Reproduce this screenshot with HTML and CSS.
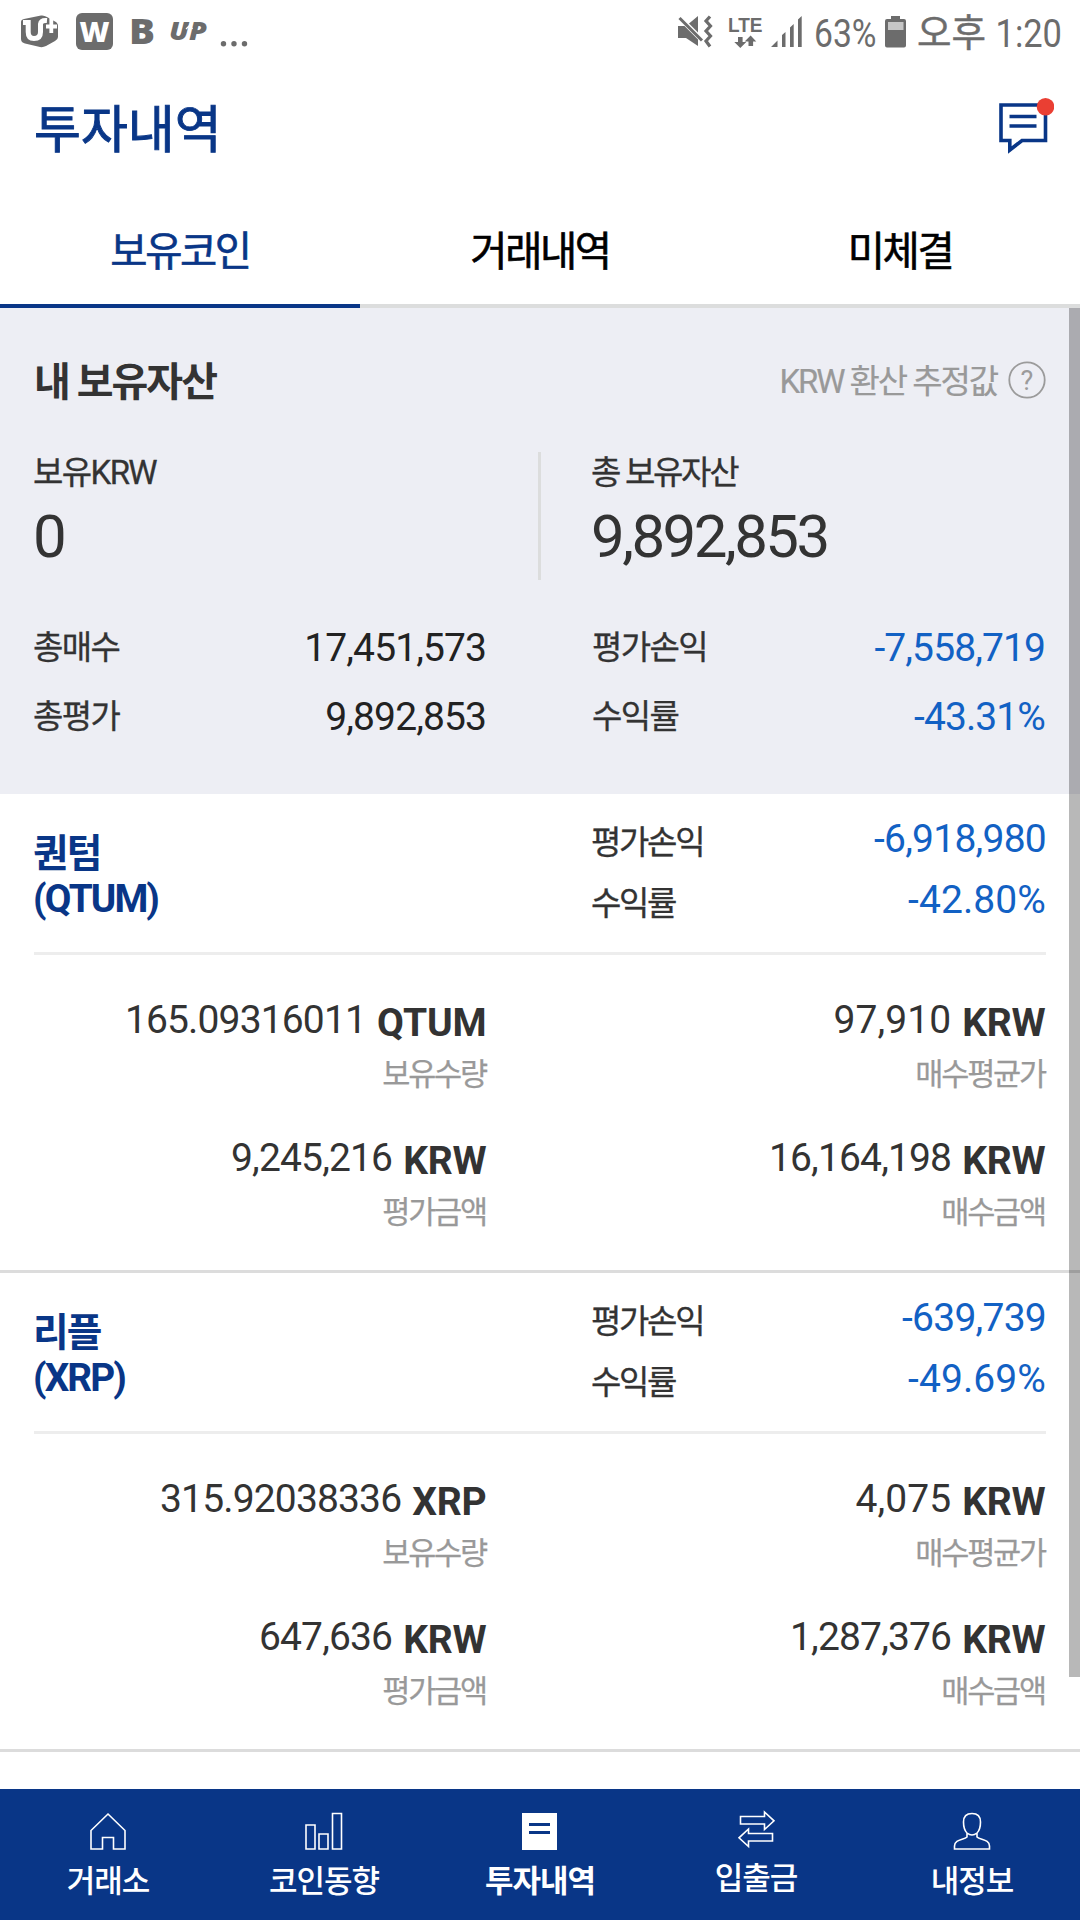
FILE: index.html
```html
<!DOCTYPE html>
<html lang="ko">
<head>
<meta charset="utf-8">
<title>투자내역</title>
<link rel="stylesheet" href="styles.css">
</head>
<body>
<div class="app">
  <div class="status">
    <svg class="status-icons" width="260" height="64" viewBox="0 0 260 64">
      <path class="g" d="M21 22Q21 19.500 24 19L41 15.500Q44 15 47 17L55 21.500Q58 23 58 26V37Q58 39.500 55 41L46 46Q43 47.500 40 47L25 43.500Q21 42.500 21 39Z"/>
      <path d="M23 22.500H28.200V32Q28.200 38.500 34 38.500 40.500 38.500 40.500 32V24Q41 20 47 20.500" fill="none" stroke="#fff" stroke-width="5"/>
      <path d="M51.300 18V33M46 26.500H57" fill="none" stroke="#fff" stroke-width="3.800"/>
      <rect class="g" x="76" y="13" width="37" height="37" rx="6"/>
      <text class="mark w" x="79.500" y="41.500" textLength="30" lengthAdjust="spacingAndGlyphs">W</text>
      <text class="mark b" x="129" y="44.200" textLength="26" lengthAdjust="spacingAndGlyphs">B</text>
      <text class="mark up" x="169" y="40" textLength="38" lengthAdjust="spacingAndGlyphs">UP</text>
      <path d="M187 42L189.500 27M186 29L190 25 192.500 29" fill="none" stroke="#fff" stroke-width="1.200"/>
      <circle class="g" cx="223.500" cy="43.700" r="2.700"/><circle class="g" cx="234" cy="43.700" r="2.700"/><circle class="g" cx="244.500" cy="43.700" r="2.700"/>
    </svg>
    <svg class="status-icons" width="420" height="64" viewBox="660 0 420 64">
      <path class="g" d="M678 26H686L698 16V46L686 38H678Z"/>
      <path d="M678 16L704 42" stroke="#fff" stroke-width="5"/>
      <path d="M679.500 18L702 40.500" stroke="#6c6c6c" stroke-width="3"/>
      <path d="M710 16.500L706 21 710.500 26 706 31 710.500 36 706 41 710 46.500" fill="none" stroke="#6c6c6c" stroke-width="3.200"/>
      <text class="lte" x="728" y="31.500" textLength="34.500" lengthAdjust="spacingAndGlyphs">LTE</text>
      <path class="g" d="M738 37h4.600v5h3.700l-6 6-6-6H738zM748.500 46h4.600v-4.500h3.200L750.600 35.500l-6 6h3.900z"/>
      <path class="g" d="M771 47L777.500 40.500V47ZM782 35L785.500 32V47H782ZM790 27.500L793.700 24V47H790ZM798 19.500L801.700 16V47H798Z"/>
      <text class="st" x="814" y="47" textLength="62.500" lengthAdjust="spacingAndGlyphs">63%</text>
      <path class="g" d="M891 16H900V19H904Q906 19 906 21V45.500Q906 47.500 904 47.500H887Q885 47.500 885 45.500V21Q885 19 887 19H891Z"/>
      <rect x="888" y="22" width="15.500" height="8" fill="#c6c6c6"/>
      <text class="st ko" x="917" y="46" textLength="69" lengthAdjust="spacingAndGlyphs">오후</text>
      <text class="st" x="995.500" y="47" textLength="66.500" lengthAdjust="spacingAndGlyphs">1:20</text>
    </svg>
  </div>

  <header class="header">
    <h1>투자내역</h1>
    <svg class="chat" width="56" height="58" viewBox="998 97 56 58">
      <path d="M1001 105H1045.500V140.500H1022L1009.800 150V140.500H1001Z" fill="none" stroke="#093687" stroke-width="3.600"/>
      <path d="M1009.500 116.500H1036.500M1009.500 126H1036.500" stroke="#093687" stroke-width="3.400"/>
      <circle cx="1045.500" cy="106.700" r="8.800" fill="#ea3f33"/>
    </svg>
  </header>

  <nav class="tabs">
    <a class="tab active">보유코인</a><a class="tab">거래내역</a><a class="tab">미체결</a>
  </nav>

  <main class="content">
    <section class="summary">
      <div class="summary-head">
        <h2>내 보유자산</h2>
        <div class="hint">KRW 환산 추정값
          <svg width="38" height="38" viewBox="0 0 38 38"><circle cx="19" cy="19" r="17.700" fill="none" stroke="#9b9b9b" stroke-width="1.800"/><text class="q" x="19" y="28.500">?</text></svg>
        </div>
      </div>
      <div class="totals">
        <div class="total"><span class="label">보유KRW</span><b>0</b></div>
        <div class="total right"><span class="label">총 보유자산</span><b>9,892,853</b></div>
      </div>
      <div class="grid">
        <div class="pair"><span class="label">총매수</span><span class="num">17,451,573</span></div>
        <div class="pair"><span class="label">평가손익</span><span class="num down">-7,558,719</span></div>
        <div class="pair"><span class="label">총평가</span><span class="num">9,892,853</span></div>
        <div class="pair"><span class="label">수익률</span><span class="num down">-43.31%</span></div>
      </div>
    </section>

    <section class="coin">
      <div class="coin-head">
        <h3>퀀텀<br>(QTUM)</h3>
        <div class="coin-rate">
          <div class="pair"><span class="label">평가손익</span><span class="num down">-6,918,980</span></div>
          <div class="pair"><span class="label">수익률</span><span class="num down percent">-42.80%</span></div>
        </div>
      </div>
      <div class="coin-body">
        <div class="cell"><p><span>165.09316011</span><b>QTUM</b></p><small>보유수량</small></div>
        <div class="cell average"><p><span>97,910</span><b>KRW</b></p><small>매수평균가</small></div>
        <div class="cell"><p><span>9,245,216</span><b>KRW</b></p><small>평가금액</small></div>
        <div class="cell"><p><span>16,164,198</span><b>KRW</b></p><small>매수금액</small></div>
      </div>
    </section>

    <section class="coin">
      <div class="coin-head">
        <h3>리플<br>(XRP)</h3>
        <div class="coin-rate">
          <div class="pair"><span class="label">평가손익</span><span class="num down">-639,739</span></div>
          <div class="pair"><span class="label">수익률</span><span class="num down percent">-49.69%</span></div>
        </div>
      </div>
      <div class="coin-body">
        <div class="cell"><p><span>315.92038336</span><b>XRP</b></p><small>보유수량</small></div>
        <div class="cell average"><p><span>4,075</span><b>KRW</b></p><small>매수평균가</small></div>
        <div class="cell"><p><span>647,636</span><b>KRW</b></p><small>평가금액</small></div>
        <div class="cell"><p><span>1,287,376</span><b>KRW</b></p><small>매수금액</small></div>
      </div>
    </section>
    <div class="scrollbar"></div>
  </main>

  <nav class="bottom">
    <a class="item">
      <svg width="44" height="44" viewBox="0 0 44 44"><path d="M22 5L39 21.500V40H27.500V28.500H16.500V40H5V21.500Z"/></svg>
      <span>거래소</span>
    </a>
    <a class="item">
      <svg width="44" height="44" viewBox="0 0 44 44"><path d="M4 16H13V40H4ZM17 25H26V40H17ZM30.500 4.500H39.500V40H30.500Z"/></svg>
      <span>코인동향</span>
    </a>
    <a class="item active">
      <svg width="44" height="44" viewBox="0 0 44 44"><path d="M4 4H39V41H4Z" class="solid"/><path d="M11 15.500H32M11 23.500H32" class="ink"/></svg>
      <span>투자내역</span>
    </a>
    <a class="item raised">
      <svg width="44" height="44" viewBox="0 0 44 44"><path d="M6.500 10.500H30.500V6L40 14.800 30.500 23.500V18H6.500ZM38.500 27.500H14.500V23L5 31.800 14.500 40.500V35H38.500Z"/></svg>
      <span>입출금</span>
    </a>
    <a class="item">
      <svg width="44" height="44" viewBox="0 0 44 44"><path d="M17 24C14 21 13.500 17 13.500 13 13.500 7 17 4.500 22 4.500S30.500 7 30.500 13C30.500 17 30 21 27 24Q22 28 17 24V28C14 31 4.500 30 4.500 37V40H39.500V37C39.500 30 30 31 27 28V24"/></svg>
      <span>내정보</span>
    </a>
  </nav>
</div>
</body>
</html>
```
FILE: styles.css
```css
* { box-sizing: border-box; }
body, h1, h2, h3, p { margin: 0; }
body {
  width: 1080px;
  height: 1920px;
  background: #fff;
  color: #333;
  font-family: Roboto, "Noto Sans CJK KR", sans-serif;
  overflow: hidden;
}
.app { display: flex; flex-direction: column; height: 1920px; }

.status { display: flex; justify-content: space-between; height: 64px; }
.status-icons { display: block; }
.g { fill: #6c6c6c; }
.mark { font-family: "Open Sans", sans-serif; font-weight: 800; fill: #6c6c6c; }
.w { font-size: 28px; fill: #fff; }
.b { font-size: 36px; }
.up { font-size: 24px; font-style: italic; }
.lte { font: 700 20px "Liberation Sans", sans-serif; fill: #6c6c6c; }
.st { font-size: 39px; fill: #6c6c6c; }
.ko { font-size: 38px; stroke: #6c6c6c; stroke-width: .5px; }

.header { display: flex; justify-content: space-between; align-items: center; height: 133px; padding: 0 26px 0 34px; }
h1 { color: #093687; font-size: 51px; font-weight: 400; line-height: 60px; -webkit-text-stroke: .9px; }
.chat { margin-bottom: 9px; }

.tabs { display: flex; height: 111px; }
.tab {
  flex: 1;
  height: 111px;
  border-bottom: 4px solid #dcdddd;
  color: #000;
  font-size: 40.5px;
  line-height: 111px;
  letter-spacing: -2.4px;
  text-align: center;
  -webkit-text-stroke: .6px;
}
.tab.active { color: #093687; border-color: #093687; }

.content { position: relative; flex: 1; }
.summary { height: 486px; padding: 41px 34px 0; background: #edeef4; }
.summary-head { display: flex; justify-content: space-between; align-items: center; height: 60px; }
h2 { font-size: 40px; font-weight: 700; letter-spacing: -2px; }
.hint { display: flex; align-items: center; gap: 11px; color: #999; font-size: 33px; letter-spacing: -2.1px; -webkit-text-stroke: .2px; }
.hint svg { margin-top: 1px; }
.q { fill: #9b9b9b; font-size: 27px; text-anchor: middle; letter-spacing: 0; }
.totals { display: grid; grid-template-columns: 504px 508px; height: 128px; margin-top: 43px; }
.total { display: flex; flex-direction: column; line-height: 42px; }
.total.right { border-left: 3px solid #dcdddd; padding-left: 51px; }
.total .label { margin-left: -1px; }
.total b { margin-left: -1px; font-size: 60px; font-weight: 400; line-height: 86px; letter-spacing: -2.55px; }
.label { font-size: 33px; letter-spacing: -1.6px; -webkit-text-stroke: .3px; }
.total.right .label { letter-spacing: -2.3px; }
.grid { display: grid; grid-template-columns: 453px 453px; justify-content: space-between; margin: 33px 1px 0 -1px; }
.pair { display: flex; justify-content: space-between; height: 69px; line-height: 69px; }
.num { padding-top: 1px; color: #222; font-size: 39px; letter-spacing: -.9px; }
.num.down { color: #1261c4; }

.coin { height: 479px; padding: 0 34px; border-bottom: 3px solid #dcdcdc; }
.coin-head { display: flex; justify-content: space-between; height: 161px; border-bottom: 3px solid #ededed; }
h3 { margin-left: -1px; padding-top: 37px; color: #093687; font-size: 38.7px; font-weight: 700; line-height: 45px; letter-spacing: -1.9px; }
.coin-rate { width: 455px; padding-top: 14px; }
.coin-rate .pair { height: 61px; line-height: 61px; }
.coin-rate .label { padding-top: 4px; letter-spacing: -2.3px; }
.coin-rate .num { letter-spacing: -.75px; }
.coin-rate .percent { letter-spacing: .1px; }
.coin-body { display: grid; grid-template-columns: 453px 453px; grid-auto-rows: 138px; justify-content: space-between; padding-top: 42px; }
.cell { text-align: right; }
.cell p { display: flex; justify-content: flex-end; gap: 11px; color: #333; font-size: 39px; line-height: 46px; letter-spacing: -.85px; }
.cell p b { padding: 3px .5px 0 0; letter-spacing: -.2px; }
.average p { letter-spacing: .05px; }
.cell small { display: block; margin: 9px 1px 0 0; color: #999; font-size: 30.6px; line-height: 40px; letter-spacing: -2.2px; -webkit-text-stroke: .25px; }

.scrollbar { position: absolute; top: 0; right: 0; width: 11px; height: 1369px; background: rgba(0, 0, 0, .28); }

.bottom { display: flex; height: 131px; background: #093687; color: #fff; }
.item { flex: 1; display: flex; flex-direction: column; align-items: center; padding-top: 20px; font-size: 31px; font-weight: 500; letter-spacing: -1px; }
.item svg { fill: none; stroke: #fff; stroke-width: 1.6; }
.item .solid { fill: #fff; stroke: none; }
.item .ink { stroke: #093687; stroke-width: 3; }
.item span { margin-top: 7px; line-height: 44px; }
.item.active { font-weight: 700; }
.item.raised { padding-top: 17px; }
```
